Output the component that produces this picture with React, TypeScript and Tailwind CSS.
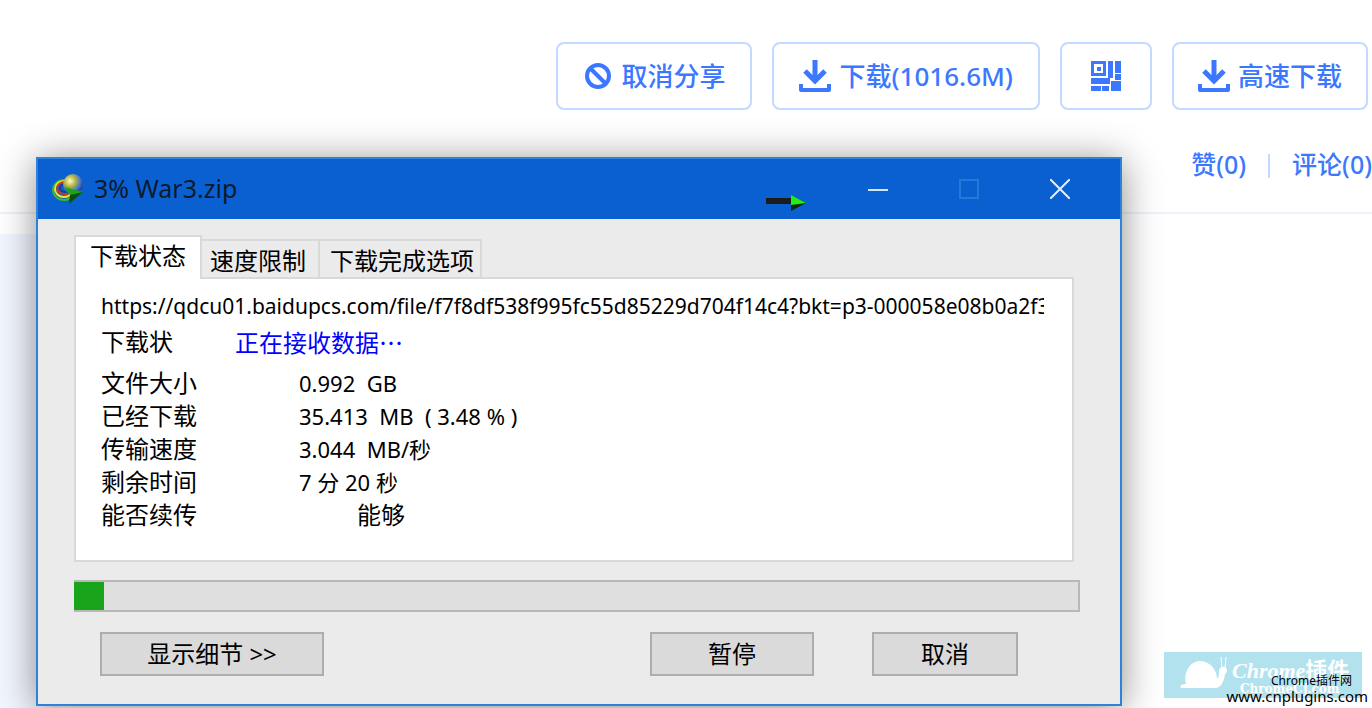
import type { ReactNode } from "react";

const TAB_BASE = "border-2 border-b-0 border-[#d9d9d9] text-2xl leading-8 whitespace-nowrap";

const rows = [
  { label: "文件大小", value: "0.992  GB" },
  { label: "已经下载", value: "35.413  MB  ( 3.48 % )" },
  { label: "传输速度", value: "3.044  MB/秒" },
  { label: "剩余时间", value: "7 分 20 秒" },
];

function BanIcon() {
  return (
    <svg width="28" height="28" viewBox="0 0 28 28" fill="none" stroke="currentColor" strokeWidth="4" aria-hidden="true">
      <circle cx="15" cy="14" r="11" />
      <path d="M7 6l16 16" />
    </svg>
  );
}

function DownloadIcon() {
  return (
    <svg width="32" height="32" viewBox="0 0 32 32" fill="none" stroke="currentColor" aria-hidden="true">
      <path d="M16 0v20" strokeWidth="5" />
      <path d="M6 11l10 10 10-10" strokeWidth="5" />
      <path d="M2 24v6h28v-6" strokeWidth="4" strokeLinejoin="round" />
    </svg>
  );
}

function QrIcon() {
  return (
    <svg width="30" height="30" viewBox="0 0 30 30" fill="currentColor" aria-hidden="true">
      <path fillRule="evenodd" d="M0 0h15v15H0zM3 3v9h9V3z" />
      <path d="M6 6h4v4H6zM17 0h5v17h-5zM24 0h6v12h-6zM24 13h6v6h-6zM0 17h19v6H0zM0 25h10v5H0zM11 25h7v5h-7zM20 20h10v10H20z" />
    </svg>
  );
}

function AppIcon() {
  return (
    <svg width="32" height="30" viewBox="0 0 32 30" aria-hidden="true">
      <defs>
        <radialGradient id="globe" cx="0.35" cy="0.35" r="0.75">
          <stop offset="0" stopColor="#ffffc0" />
          <stop offset="0.4" stopColor="#b0ae3c" />
          <stop offset="0.65" stopColor="#4d7fd0" />
          <stop offset="1" stopColor="#12307c" />
        </radialGradient>
      </defs>
      <g fill="none" strokeWidth="2">
        <ellipse cx="12" cy="16" rx="11" ry="10" stroke="#3bb82d" />
        <ellipse cx="12" cy="15" rx="9" ry="8" stroke="#f4e52c" />
        <ellipse cx="13" cy="14" rx="8" ry="6" stroke="#d8341c" />
        <ellipse cx="13" cy="14" rx="5" ry="4" stroke="#1c3f86" />
      </g>
      <circle cx="21" cy="10" r="10" fill="url(#globe)" />
      <path d="M12 13l19 5-14 12 1-9z" fill="#18a816" />
      <path d="M17 30l1-9 13-3z" fill="#0b4d12" />
    </svg>
  );
}

function SnailIcon() {
  return (
    <svg width="48" height="34" viewBox="0 0 48 34" fill="#fff" aria-hidden="true">
      <path d="M0 31c1-3 4-3 6-3C3 15 11 5 20 5s17 8 17 18c2-2 2-6 2-8 0-3 3-5 6-4 3 2 2 6 0 7-1 8-4 14-10 14H2z" />
      <path d="M42 12L41 1M45 12l1-11" stroke="#fff" />
    </svg>
  );
}

interface ButtonProps {
  label?: string;
  className: string;
  children: ReactNode;
}

function ShareButton({ label, className, children }: ButtonProps) {
  return (
    <button
      aria-label={label}
      className={`flex h-17 items-center rounded-lg border-2 border-[#c3d9ff] bg-white whitespace-nowrap ${className}`}
    >
      {children}
    </button>
  );
}

function DialogButton({ className, children }: ButtonProps) {
  return (
    <button className={`h-11 border-2 border-[#adadad] bg-[#dadada] text-2xl leading-8 ${className}`}>{children}</button>
  );
}

function CaptionButton({ label, disabled, children }: { label: string; disabled?: boolean; children: ReactNode }) {
  return (
    <button aria-label={label} disabled={disabled} className="flex h-15 w-[91px] items-center justify-center">
      <svg width="20" height="20" viewBox="0 0 20 20" fill="none" strokeWidth="2" aria-hidden="true">
        {children}
      </svg>
    </button>
  );
}

function DownloadDialog() {
  return (
    <section className="absolute top-[157px] right-[250px] left-9 border-2 border-[#2f82d8] bg-[#ebebeb] font-['Noto_Sans','Noto_Sans_CJK_SC',sans-serif] text-black shadow-[0_4px_36px_rgba(0,0,0,0.45)]">
      <header className="flex h-15 items-center bg-[#0a60d0] pl-3.5">
        <AppIcon />
        <h1 className="ml-2.5 text-[25px] text-[#0b1a2c]">3% War3.zip</h1>
        <svg className="mt-7 ml-auto" width="40" height="16" viewBox="0 0 40 16" aria-hidden="true">
          <path d="M0 3h25v6H0z" fill="#1c1c1c" />
          <path d="M25 0l15 8-15 8z" fill="#0a2a08" />
          <path d="M25 0l15 8-15 2z" fill="#22ee18" />
        </svg>
        <div className="mr-[15px] ml-[26px] flex">
          <CaptionButton label="最小化">
            <path d="M0 11h20" stroke="#d5e4fa" />
          </CaptionButton>
          <CaptionButton label="最大化" disabled>
            <path d="M1 1h18v18H1z" stroke="#2478d8" />
          </CaptionButton>
          <CaptionButton label="关闭">
            <path d="M0 0l20 20M20 0L0 20" stroke="#e4eefc" />
          </CaptionButton>
        </div>
      </header>

      <div className="pt-4 pr-10 pb-7 pl-9">
        <div role="tablist" className="flex items-end">
          <button role="tab" aria-selected="true" className={`${TAB_BASE} z-10 -mb-0.5 h-11 bg-white px-3.5 pb-1`}>
            下载状态
          </button>
          <button role="tab" aria-selected="false" className={`${TAB_BASE} h-[38px] border-l-0 pt-1 pr-3 pl-2`}>
            速度限制
          </button>
          <button role="tab" aria-selected="false" className={`${TAB_BASE} h-[38px] border-l-0 pt-1 pr-1.5 pl-2.5`}>
            下载完成选项
          </button>
        </div>

        <div role="tabpanel" className="mr-1.5 h-[285px] border-2 border-[#d9d9d9] bg-white pt-[11px] pr-7 pl-[25px]">
          <p className="overflow-hidden text-[21px] leading-8 whitespace-nowrap">
            https://qdcu01.baidupcs.com/file/f7f8df538f995fc55d85229d704f14c4?bkt=p3-000058e08b0a2f3
          </p>
          <table className="text-left leading-8">
            <tbody>
              <tr className="h-11 align-top">
                <th className="w-[134px] pt-1 text-2xl leading-8 font-normal">下载状</th>
                <td className="pt-1 font-['Noto_Sans_CJK_SC',sans-serif] text-2xl leading-8 text-[#0000ff]">
                  正在接收数据…
                </td>
              </tr>
              {rows.map((row) => (
                <tr key={row.label} className="h-[33px]">
                  <th className="text-2xl leading-8 font-normal">{row.label}</th>
                  <td className="pl-16 text-[22px] leading-8 whitespace-pre">{row.value}</td>
                </tr>
              ))}
              <tr className="h-[33px]">
                <th className="text-2xl leading-8 font-normal">能否续传</th>
                <td className="pl-[122px] text-2xl leading-8">能够</td>
              </tr>
            </tbody>
          </table>
        </div>

        <div
          role="progressbar"
          aria-label="下载进度"
          aria-valuenow={3}
          className="mt-[18px] h-8 border-2 border-l-0 border-[#b8b8b8] bg-[#dfdfdf]"
        >
          <div className="h-full w-[3%] bg-[#18a51b]" />
        </div>

        <div className="mt-5 flex pr-[62px] pl-[26px]">
          <DialogButton className="w-56">显示细节 &gt;&gt;</DialogButton>
          <DialogButton className="ml-auto w-41">暂停</DialogButton>
          <DialogButton className="ml-[58px] w-[146px]">取消</DialogButton>
        </div>
      </div>
    </section>
  );
}

function Watermark() {
  return (
    <aside className="absolute right-1 bottom-1 h-13 w-51 whitespace-nowrap">
      <div className="flex h-[46px] w-[198px] bg-[#b2e2ee] pt-1 pl-4 text-white">
        <SnailIcon />
        <div className="ml-1">
          <p className="font-['Liberation_Serif',serif] text-[22px] leading-6 font-bold">
            <i>Chrome</i>
            <span className="font-['Noto_Sans_CJK_SC',sans-serif]">插件</span>
          </p>
          <p className="pl-2 font-['DejaVu_Serif',serif] text-[12px] leading-3 font-bold">ChromeCJ.com</p>
        </div>
      </div>
      <div className="absolute right-0 bottom-0 text-right font-['Noto_Sans','Noto_Sans_CJK_SC',sans-serif] text-black">
        <p className="pr-4 text-[12px] leading-[14px]">Chrome插件网</p>
        <p className="text-[15px] leading-4">www.cnplugins.com</p>
      </div>
    </aside>
  );
}

export default function App() {
  return (
    <main className="relative h-screen overflow-hidden bg-white font-['Noto_Sans','Noto_Sans_CJK_SC',sans-serif] text-[#3b78ff]">
      <div className="flex justify-end gap-5 pt-[42px] pr-1 text-[26px] font-medium">
        <ShareButton className="gap-2.5 px-[25px]">
          <BanIcon />
          取消分享
        </ShareButton>
        <ShareButton className="gap-2 px-[25px]">
          <DownloadIcon />
          下载(1016.6M)
        </ShareButton>
        <ShareButton label="二维码" className="px-[29px]">
          <QrIcon />
        </ShareButton>
        <ShareButton className="gap-2 px-6">
          <DownloadIcon />
          高速下载
        </ShareButton>
      </div>

      <nav className="mt-9 flex h-[68px] items-start justify-end border-b-2 border-[#eff1fb] text-[25px] leading-9 font-medium">
        <a href="#like">赞(0)</a>
        <span className="mx-[22px] mt-2 h-6 w-0.5 bg-[#c3d9ff]" />
        <a href="#comments">评论(0)</a>
      </nav>
      <div className="mt-5 h-[480px] w-15 bg-[#f2f6ff]" />

      <DownloadDialog />
      <Watermark />
    </main>
  );
}
